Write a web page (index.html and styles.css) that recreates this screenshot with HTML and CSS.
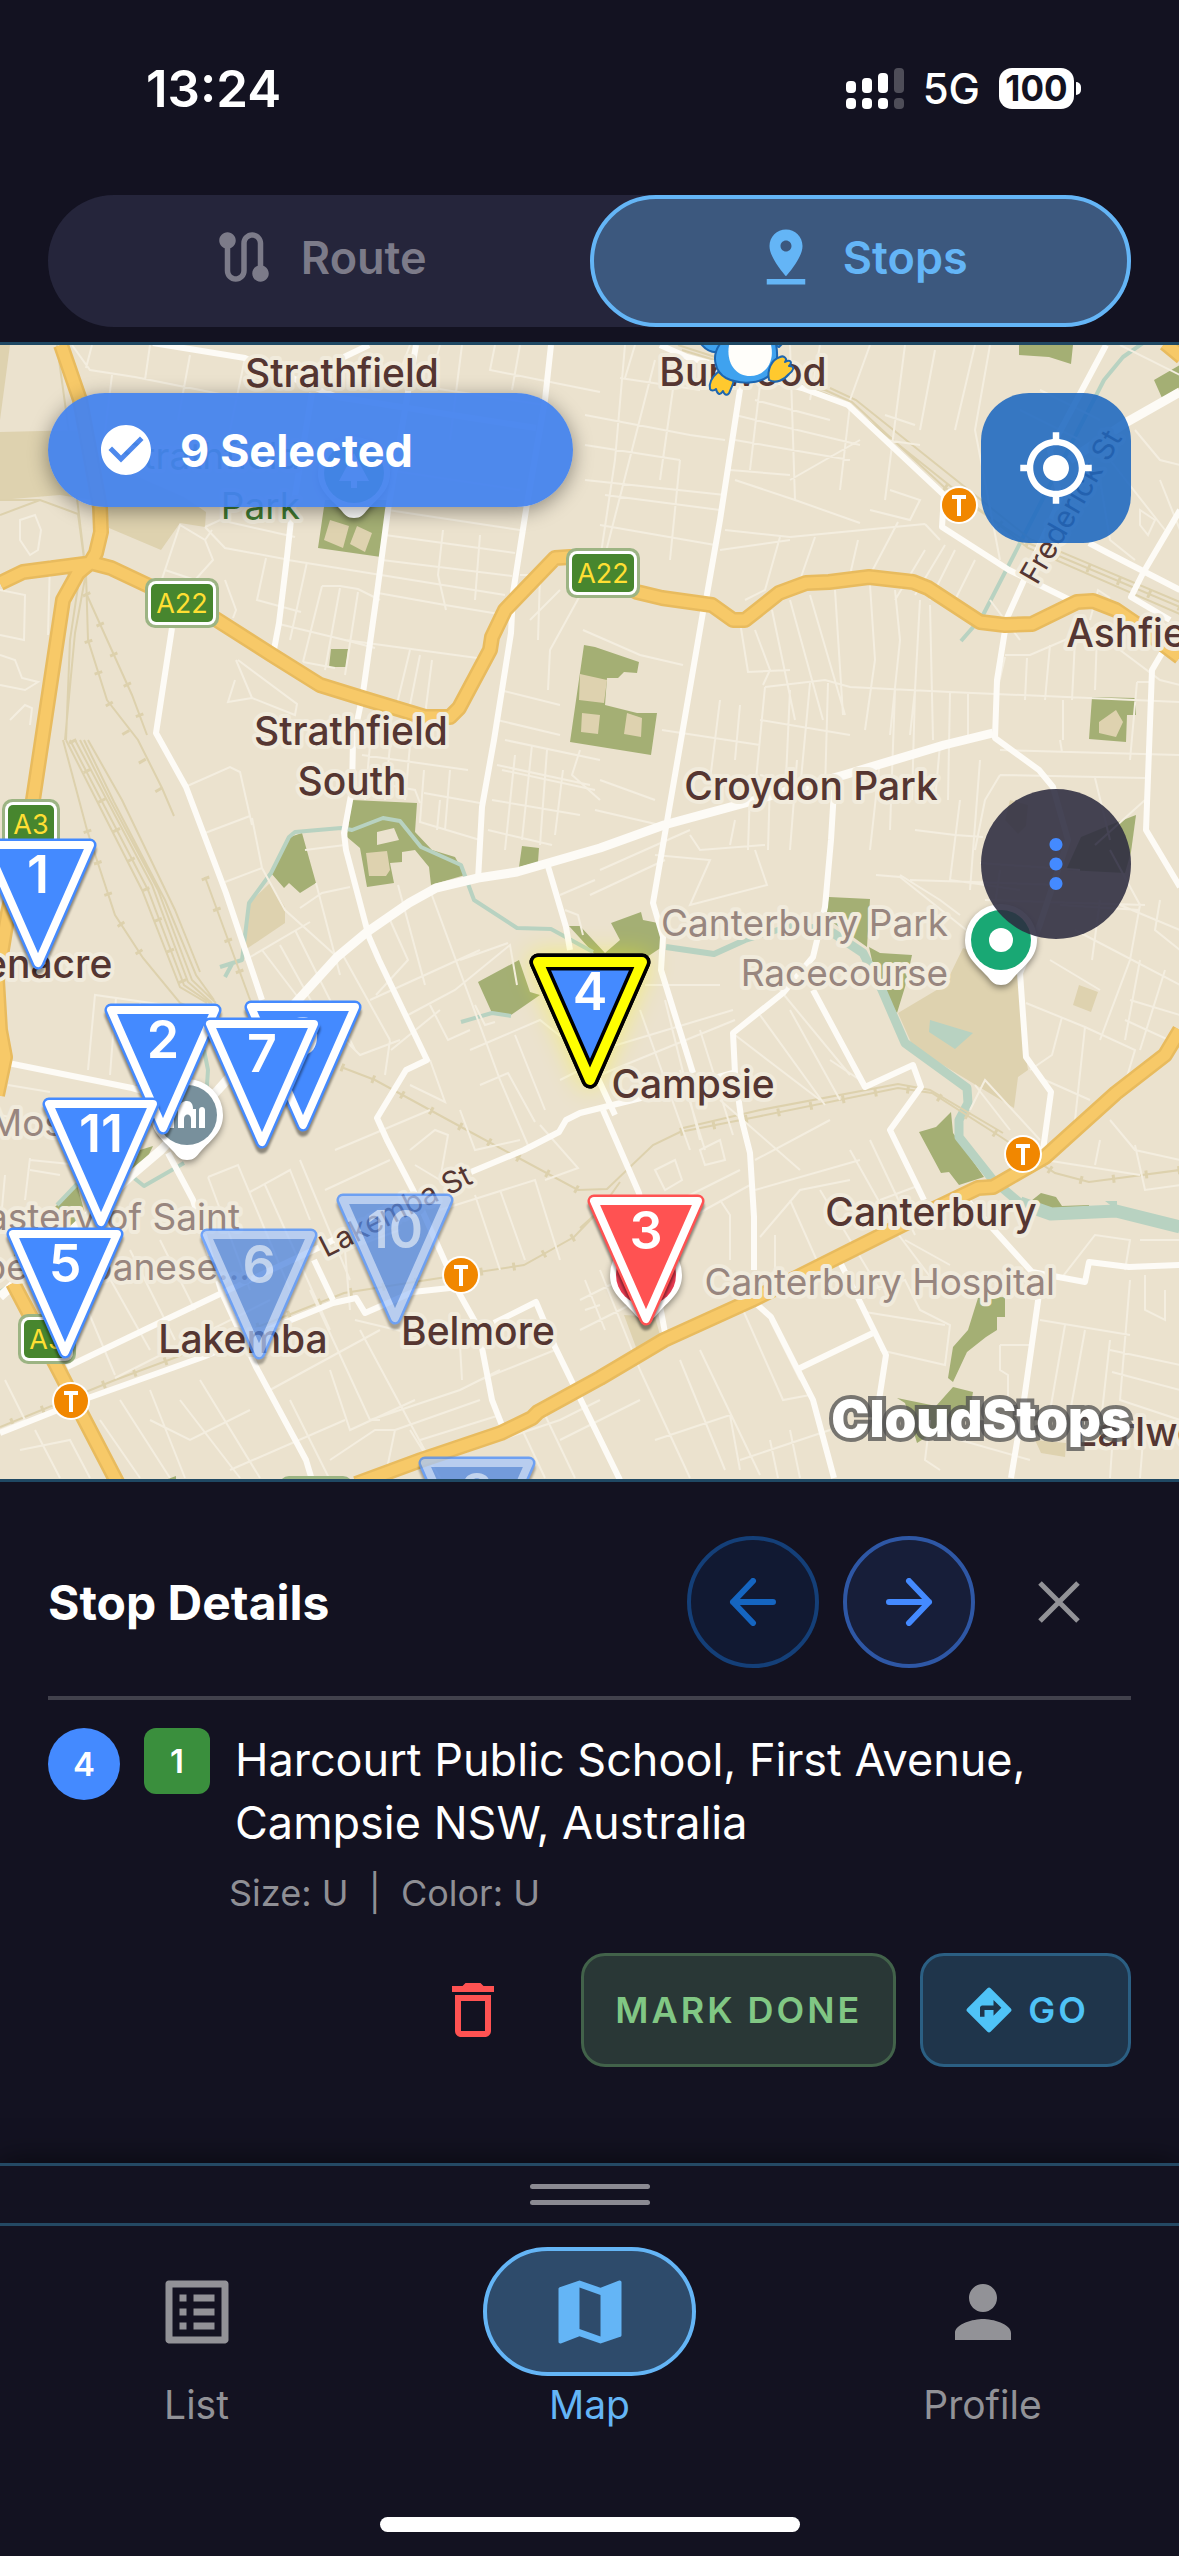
FILE: index.html
```html
<!DOCTYPE html>
<html lang="en">

<head>
    <meta charset="UTF-8">
    <meta name="viewport" content="width=device-width, initial-scale=1.0">
    <title>CloudStops</title>
    <link rel="stylesheet" href="styles.css">
</head>

<body>
    <div id="app">
        <header class="header">
            <div class="status">
                <span class="time">13:24</span>
                <div class="status-right">
                    <svg class="signal" viewBox="0 0 58 42" fill="#fff">
                        <rect x="0" y="13" width="10" height="12" rx="4" />
                        <rect x="16" y="10" width="10" height="15" rx="4" />
                        <rect x="32" y="5" width="10" height="20" rx="4" />
                        <rect x="48" y="0" width="10" height="25" rx="4" opacity=".25" />
                        <rect x="0" y="30" width="10" height="11" rx="4" />
                        <rect x="16" y="30" width="10" height="11" rx="4" />
                        <rect x="32" y="30" width="10" height="11" rx="4" />
                        <rect x="48" y="30" width="10" height="11" rx="4" opacity=".25" />
                    </svg>
                    <span class="network">5G</span>
                    <span class="battery">100</span>
                </div>
            </div>
            <div class="switch">
                <button type="button" class="switch-item">
                    <svg class="icon" viewBox="0 0 24 24"><path d="M19 15.18V7c0-2.21-1.79-4-4-4s-4 1.79-4 4v10c0 1.1-.9 2-2 2s-2-.9-2-2V8.82C8.16 8.4 9 7.3 9 6c0-1.66-1.34-3-3-3S3 4.34 3 6c0 1.3.84 2.4 2 2.82V17c0 2.21 1.79 4 4 4s4-1.79 4-4V7c0-1.1.9-2 2-2s2 .9 2 2v8.18c-1.16.41-2 1.51-2 2.82 0 1.66 1.34 3 3 3s3-1.34 3-3c0-1.3-.84-2.4-2-2.82z" /></svg>
                    Route
                </button>
                <button type="button" class="switch-item active">
                    <svg class="icon" viewBox="0 0 24 24"><path d="M18 8c0-3.31-2.69-6-6-6S6 4.69 6 8c0 4.5 6 11 6 11s6-6.5 6-11zm-8 0c0-1.1.9-2 2-2s2 .9 2 2-.89 2-2 2c-1.1 0-2-.9-2-2zM5 20v2h14v-2H5z" /></svg>
                    Stops
                </button>
            </div>
        </header>

        <main class="map">
            <svg class="map-canvas" viewBox="0 345 1179 1134" preserveAspectRatio="xMidYMid slice">
                <defs>
                    <path id="tri" d="M-52 0H52L0 118Z" />
                    <path id="drop" d="M0 45C-7 45-9 42-14 36-24 25-36 17-36 0A36 36 0 0 1 36 0C36 17 24 25 14 36 9 42 7 45 0 45Z" />
                    <g id="train">
                        <circle r="19" fill="#fff" />
                        <circle r="17" fill="#f18700" />
                        <path d="M-7-8H7M0-8V11" stroke="#fff" stroke-width="4" />
                    </g>
                    <g id="shield">
                        <rect x="-37" y="-25" width="74" height="50" rx="10" fill="#9cb483" />
                        <rect x="-34" y="-22" width="68" height="44" rx="8" fill="#fff" />
                        <rect x="-31" y="-19" width="62" height="38" rx="5" fill="#47862e" />
                    </g>
                    <g id="shield-s">
                        <rect x="-29" y="-25" width="58" height="50" rx="10" fill="#9cb483" />
                        <rect x="-26" y="-22" width="52" height="44" rx="8" fill="#fff" />
                        <rect x="-23" y="-19" width="46" height="38" rx="5" fill="#47862e" />
                    </g>
                </defs>

                <rect y="345" width="1179" height="1134" fill="#ebe2ce" />

                <!-- sand areas -->
                <g class="sand">
                    <path d="M0 345H10L0 420ZM0 432 84 430 92 500 60 495 0 500ZM100 460 184 497 206 512 205 527 180 523 161 550 109 528Z" />
                    <path d="M270 883 285 907V923L245 950 249 903Z" />
                    <path d="M963 948 1020 970 1026 1057 1028 1070 1018 1077 1014 1108 913 1047 898 1013 945 985Z" />
                    <path d="M1079 985 1098 992 1091 1012 1073 1005ZM624 1315 655 1317 660 1335 637 1350ZM1035 1440 1066 1443 1065 1457 1041 1453Z" />
                    <path d="M1010 800 1028 805 1026 826 1018 834 1005 820Z" />
                </g>

                <!-- parks -->
                <g class="park">
                    <path d="M325 500H388L381 557 318 548ZM331 649H348L346 667H329Z" />
                    <path d="M584 645 595 647 639 662 637 673 624 672 618 678H607L605 705 637 713H657L651 755 570 742Z" />
                    <path d="M1019 345H1073L1071 364 1049 357 1019 355ZM1154 380 1180 365V387L1162 398Z" />
                    <path d="M1092 697 1136 698V715H1127L1126 742 1089 739Z" />
                    <path d="M352 800 417 803 415 832 432 850 455 857 465 875 431 885 429 867 415 850 402 852V862L390 863 394 883 367 887 360 848 347 837Z" />
                    <path d="M302 833 316 883 300 893 289 883 284 888 271 873 287 838ZM522 846 539 848 538 862 519 867Z" />
                    <path d="M519 960 478 982 492 1013 511 1015 540 995 530 992Z" />
                    <path d="M569 926H580L605 953 620 940 611 923 641 912 643 920 658 923 662 947 620 975 600 960Z" />
                    <path d="M829 897 870 899 867 947 825 917ZM869 947 880 953 912 955 905 987 897 1013 878 987Z" />
                    <path d="M1136 815 1131 852 1125 873 1066 870 1081 837 1110 825Z" />
                    <path d="M951 1112 953 1133 984 1177 959 1185 949 1172 941 1173 919 1132 936 1127Z" />
                    <path d="M1041 1193 1056 1197 1062 1206 1089 1205V1210L1039 1212 1026 1205Z" />
                    <path d="M978 1298 1005 1297V1317H997V1330L986 1337 967 1352 953 1382 948 1378 953 1347 968 1330Z" />
                    <path d="M953 1387 973 1392 970 1410 917 1443 905 1403 897 1398 936 1406Z" />
                    <path d="M153 1146 140 1173 128 1178 140 1150ZM77 1185 55 1207 75 1240 84 1210ZM168 1479 176 1476V1479ZM14 1254 22 1270 14 1265Z" />
                </g>
                <g class="sand">
                    <path d="M330 520 349 526 343 548 324 540ZM357 526 372 533 365 552 350 544ZM580 674 607 680 604 703 579 700ZM582 713 600 715 598 734 581 732ZM627 713 642 718 641 737 624 734Z" />
                    <path d="M1099 722 1116 710 1123 722 1116 737 1099 733ZM366 853 387 851 390 870 386 876H369Z" />
                </g>
                <path d="M377 832 394 828 399 840 377 845Z" fill="#ebe2ce" />

                <!-- water -->
                <g class="water">
                    <path d="M220 967 242 960 249 903 271 873 289 837 295 832 341 828 352 830 383 818 400 821 421 847 461 865 474 900 517 928 551 929 593 952M225 977 232 964" />
                    <path d="M461 1022 492 1013 511 1016M1143 343 1123 357 1104 380 982 617 961 641M184 1163 144 1186 134 1178M57 1205 77 1184M204 1050 208 1070 206 1100M0 1292 12 1284" />
                    <path d="M666 947 714 954 745 940 794 925" stroke-width="6" />
                    <path d="M794 925 833 933 863 953 882 990 905 1043 967 1088 968 1103 959 1120V1137L993 1180 1020 1203" stroke-width="9" />
                    <path d="M1020 1203 1051 1214 1116 1211 1180 1227" stroke-width="13" />
                    <path d="M930 1020 973 1033 955 1049 929 1032ZM1105 1201H1117V1210Z" fill="#b8d2c1" stroke="none" />
                </g>

                <!-- railways -->
                <g class="rail">
                    <path d="M57 345 70 440 86 573 75 633 65 740M80 573 70 640 66 740M86 573 88 640 107 700 138 740 162 788 174 816M86 593 132 695 147 735M0 500 40 500 78 514 86 573M0 515 40 500" />
                    <path d="M63 740 87 830 115 915 143 958 180 1003 210 1015" />
                    <path d="M66 740 142 890 180 987 207 1003M70 740 148 890 184 985 210 1003M75 740 152 885 188 982 212 1003M80 740 110 800 158 890 192 980 216 1003M84 740 114 802 165 900 196 975 214 1000M88 740 122 800 175 910 200 972" />
                    <path d="M205 877 249 997 262 1030M341 1067 375 1080 463 1128 578 1190 607 1189 653 1145 680 1132 756 1117 898 1088 932 1093 1001 1137 1055 1173 1089 1182 1180 1170" />
                    <path d="M683 1128 760 1110 898 1084 930 1090 1003 1133M580 1228 600 1210 620 1182M600 1210 574 1237 524 1265 440 1278 344 1293 268 1323 115 1380 0 1427" />
                    <path d="M678 345 740 365 825 390 852 402 944 487 1028 543 1180 607M682 350 826 394 850 406 1028 548 1180 614M830 388 856 400 1030 539 1180 602" />
                </g>
                <path class="sleepers" d="M72 740 146 890 184 985M86 593 132 695 147 735M88 640 107 700 174 816M87 830 115 915 143 958M205 877 249 997M341 1067 375 1080 463 1128 578 1190M680 1132 756 1117 898 1088 932 1093 1001 1137 1055 1173 1089 1182 1180 1170M574 1237 524 1265 440 1278 344 1293 268 1323 115 1380 0 1427M944 487 1028 543 1180 607" />

                <!-- side streets -->
                <path class="street" d="M72 345 90 370 135 377 240 398M92 345 86 368M112 375 104 440M150 345 145 380M190 355 178 420M245 358 230 430M205 527 225 548 290 560M205 527 220 520 295 537M160 585 180 525 205 540 213 560 195 580 165 570M205 540 212 530M20 520 35 515 41 530 38 550 30 555 20 540ZM0 590 25 595 24 640 0 635M0 655 15 660 22 678 38 682 25 690 0 685M10 720 25 705 32 708 30 725M50 560 48 635M225 580 236 610 233 618M288 560 505 595M307 562 290 640M266 558 257 600 301 612M322 586H340L358 589 380 600M322 586 303 662M340 588 325 670M358 592 345 675M303 662 335 668M279 624 345 640 492 660M345 640 375 648M238 660 297 704 295 715 252 698 236 660M252 698 228 702 235 680M410 345 395 385M462 345 450 440M495 345 490 370 600 392M392 382 545 405M440 345 432 375M520 345 512 390M388 470 520 490M388 510 520 530M385 535 515 553M382 560 512 576M378 593 445 605 505 615M443 530 438 575 446 610M480 535 475 600M410 650 395 712M420 655 408 715M432 660 425 715M505 740 600 760M502 770 595 790M500 690 560 705M497 720 560 735M520 575 540 575 538 640M530 620 560 590M548 690 550 650 583 590M583 630 640 655 683 665" />
                <path class="street" d="M370 745 365 800M390 745 385 800M410 745 405 800M362 755 468 770M360 780 415 790 420 803M424 770 420 822 480 840M424 793 480 803M440 800 437 830M450 770 445 830M515 755 505 850M532 745 522 840M547 750 540 845M563 770 555 835M580 750 572 775 600 800M497 765 590 785M492 800 580 815M488 830 552 845M185 787 230 767 240 772 252 825M205 833 250 816M225 882 262 868 285 910 335 955M252 818 262 868M305 850 345 845M316 883 340 975M300 908 322 893 350 887M245 960 310 922M262 950 300 1000M280 945 330 1035M295 930 355 1050M340 950 390 1040M376 995 408 960 390 920M425 985 398 885M370 1000 480 950M408 1015 455 990 510 945 517 985M430 890 500 1080 530 1150M391 1050 440 1010M340 1035 360 1055 400 1040M430 1005 448 1040 470 1030M475 1005 485 1025 495 1022M390 1040 385 1075M410 1085 445 1102 430 1060M480 1085 508 1073 535 1122M470 1050 540 1020 590 1060M515 1035 545 1110M560 1080 600 1060M460 960 508 943M560 895 595 880M565 910 578 915 583 935M88 1070 95 995 200 1010M116 998 110 1075M140 1003 135 1085M8 1085 50 1092M0 1115 45 1125M30 1160 80 1165M5 1175 0 1230M30 1158 25 1200M30 1170 60 1175" />
                <path class="street" d="M625 345 615 460 600 560M655 360 600 575M620 378 700 390M635 345 625 378M585 415 690 435M585 445 680 460M585 480 725 495M605 495 720 510M600 525 715 545M675 375 660 480M690 435 725 440M680 460 670 560M755 400 830 420M760 385 750 470M735 415 860 445M735 440 850 460M730 470 790 475M790 345 795 500 860 523M850 405 840 490M820 345 810 400M870 345 850 400M905 345 885 500M935 350 920 430M975 345 955 430M735 480 795 500M860 440 790 480M890 490 920 500 910 520 870 510M885 415 915 425M885 440 920 445M725 530 790 537M720 550 790 540M780 537 765 590 745 600M815 537 800 580M858 540 850 575M898 522 870 575M790 537 925 524M925 524 940 540M925 550 895 600M945 545 915 595M955 550 930 600M975 560 950 610M740 622 748 672 790 670M755 630 770 670 763 685M772 610 795 720M790 600 823 720M810 595 845 715M835 590 843 715M870 585 875 660 865 730M895 590 900 640 890 735M920 600 915 690 910 735M930 605 933 740M765 687 825 680 850 687 950 692 1180 702M765 687 755 790M790 690 785 800M810 683 800 790M828 683 825 790M895 690 890 830M915 690 912 800M950 692 948 800M968 692 968 735M1005 655H1030L1100 625M1005 657 995 700M1050 645 1045 700M1075 640 1072 700M1097 635 1095 690M1027 658 1025 700M1063 700V740M1120 650 1160 680 1180 685M1137 682H1152M1137 682 1130 760M760 775 830 790M760 720 850 735M662 730 760 745M720 700 710 780M740 705 735 760" />
                <path class="street" d="M990 345 975 430 1000 560M1040 390 1100 420M1020 410 1080 440M1110 460 1165 530M1120 345 1180 375M1135 430 1160 460 1180 465M1140 510 1155 520 1148 535 1140 525ZM1160 480 1180 530M1100 480 1110 540 1135 560M990 600 1020 640M1090 620 1098 590 1110 598M1160 620 1180 640M1000 750 1180 755M1000 775 1145 778M1060 740 1062 752M1095 778 1110 840M1145 800 1095 845M1110 850 1140 905 1130 960 1100 1040M940 745 935 800M980 760 970 890M1000 775 985 800 975 850M960 800 950 880 1020 890M915 830 955 835M955 835 983 837M900 875 940 900 960 915M876 875 900 877 985 945M910 880 1060 885M980 863 1080 870M985 900 1145 905M1000 870 990 940M1060 905 1140 910M1075 930 1180 985M1100 900 1092 960M1120 905 1180 930M1050 960 1100 990M1160 900 1155 930 1180 950M1026 1003 1085 1027 1135 1050 1120 1100M1062 1017 1052 1055 1030 1070M1085 1027 1075 1120M1125 1020 1180 1045M1130 1000 1180 1015M1140 960 1125 1040M1165 970 1140 1050M1045 1080 1090 1100M1110 1120 1135 1150 1180 1160M1045 1160 1140 1175M1135 1145 1145 1190 1180 1185M1100 1140 1095 1165M970 1110 985 1080 1040 1140M975 1085 1010 1130" />
                <path class="street" d="M600 780 655 800M595 810 660 825M600 870 690 830M590 895 665 860M655 855 710 860 690 905 767 885 755 850M690 835 700 850 765 845M735 820 730 845M750 790 748 850M880 760 870 850M797 760 790 850M770 780 768 850M645 985 720 985M600 1050 733 1010M600 1075 735 1020M640 1010 690 1150M665 1000 700 1140M700 1030 733 1135M735 1035 820 1100M760 1015 825 1105M780 990 850 1075M830 1060 860 1080M790 1010 840 1100M720 1100 800 1170M680 1070 705 1150M655 1170 675 1160 682 1180 665 1190ZM700 1150 720 1140 725 1160 705 1165ZM640 1220 740 1170M650 1240 750 1185M755 1160 830 1120M755 1190 860 1160M760 1237 800 1190 850 1180M730 1260V1215L720 1200M775 1235V1270M790 1200 830 1290M820 1190 880 1290M850 1150 895 1230 940 1290M870 1140 915 1235M880 1200 920 1185M905 1240 950 1265M870 1290 905 1280 920 1310 950 1325 945 1365 880 1350M865 1312 945 1325M770 1320 800 1380M743 1310 783 1400 810 1395M700 1350 760 1475M680 1360 725 1470M640 1370 690 1478M655 1440 730 1415 740 1470M640 1400 560 1440M740 1460 830 1430M770 1440 778 1478M790 1430 800 1478M930 1420 925 1460 940 1470M960 1440 1030 1460M1040 1320 1130 1335M1130 1280 1120 1400 1180 1420M1065 1325 1045 1440M1085 1330 1065 1440M1110 1340 1100 1430M1112 1372 1180 1390M1110 1350 1180 1365M1060 1280 1095 1235 1130 1240 1125 1270M1145 1275V1310L1165 1320V1290M1000 1345H1030M1000 1345V1370L1008 1375V1400L990 1407 975 1400M1140 1240H1180M1115 1405 1110 1478M1145 1415 1140 1478M585 1280 605 1330M600 1270 640 1370M580 1300 620 1280M580 1330 640 1300" />
                <path class="street" d="M208 1177 238 1165 290 1290M208 1177 250 1290M250 1192 290 1170 310 1220M265 1185 330 1330M300 1160 350 1280M335 1150 430 1110M325 1190 390 1160M410 1150 435 1130 448 1135 440 1180 415 1165M460 1110 475 1150 520 1140M440 1210 535 1180 560 1260M475 1195 500 1270M500 1190 525 1260M540 1125 578 1168 545 1180M350 1310 345 1250 400 1230M310 1290 370 1420 380 1420M360 1330 430 1460M355 1320 460 1345 462 1380M370 1420 460 1390 500 1370M270 1390 380 1330M290 1400 330 1480M330 1370 350 1430 415 1400M250 1410 190 1440 150 1420M180 1400 240 1478M150 1390 185 1478M120 1400 170 1478M100 1420 140 1478M200 1380 260 1478M230 1470 345 1420M330 1460 375 1430 395 1430 385 1478M395 1430 480 1400M420 1440 500 1415M410 1430 440 1478M20 1450 70 1440 90 1478M35 1430 60 1478M5 1380 25 1420 0 1430M75 1280 115 1375M105 1270 150 1350M130 1250 175 1340M160 1240 195 1310M115 1378 270 1300M480 1380 555 1350M500 1440 560 1420 600 1400M520 1425 545 1478M545 1415 575 1478M585 1310 600 1305" />

                <!-- main roads -->
                <g class="road">
                    <path d="M153 343 245 358 337 397 536 428M344 357 369 345M551 345 545 400 526 510 513 593 511 633 494 740 482 807 478 880M312 393 291 520 287 557 279 623 273 655" />
                    <path d="M416 345 388 510 377 593 363 693 358 717 353 740 352 790 344 833 346 850 369 937 379 960 427 1060 406 1070 377 1118 387 1140 413 1190 459 1293 478 1327 492 1400 503 1428" />
                    <path d="M172 628 156 733 186 787 226 893 262 1000M168 1153 193 1200 222 1293 256 1367 306 1460 312 1480M8 1063 132 1088 175 1100M547 863 566 927 570 950" />
                    <path d="M645 1097 580 1113 566 1120 559 1132 524 1150 471 1172M380 1215 320 1247 222 1293 165 1320 67 1367M645 1097 733 1073M0 1433 88 1398 161 1372 203 1357 291 1320 333 1303 356 1298 365 1313 413 1292 459 1287M314 1260 333 1300" />
                    <path d="M494 1323 536 1302 555 1347 620 1480M603 1110 639 1193 666 1338M741 383 720 520 706 600 703 612 681 740 653 903 663 937 661 970 693 1073M580 1040 615 1115M660 345 687 357 802 388 848 405 944 495 942 527 1009 570 1074 602" />
                    <path d="M1106 345 1050 450 1060 500 1007 618 997 680 995 738 1039 770 1053 787 1068 840 1039 927 1020 973 1026 1057 1051 1092 1043 1150M1089 543 1108 553 1180 590M1180 510 1143 573 1131 597 1170 620M1162 653 1152 670 1146 830 1180 887" />
                    <path d="M834 790 831 840 825 907 813 957 783 993 733 1033 735 1073 741 1117 750 1153 754 1217V1270M813 990 865 1087 913 1065 921 1087 890 1130 924 1200M840 1262 859 1300 886 1355 879 1400M752 1300 771 1317 813 1400 834 1478M800 1368 873 1333" />
                    <path d="M967 1200 1032 1272 1085 1282 1089 1262 1129 1267 1180 1265M1041 1280 1024 1400 1011 1478" />
                </g>
                <path class="road wide" d="M993 733 944 745 844 775 745 803 664 825 600 848 517 872 478 878 436 888 409 903 367 932 337 957 298 1000 218 1090 161 1150 134 1173 0 1297M1127 422 1180 392M1070 460 1127 422" />

                <!-- motorways -->
                <g id="motorways">
                    <path class="casing" d="M61 345 80 400 100 507 101 532 96 553 90 563 78 573 63 600 57 640 42 740 33 800 8 913-3 980 0 1030 5 1057-3 1095M0 583 23 572 92 563 111 568 147 585 214 618 272 655 320 685 362 698 425 717H450L459 708 490 650 492 637 505 610 555 558 570 557 603 573 637 592 662 598 712 605 733 620H745L779 593 806 583 829 582 869 577 913 582 928 588 980 622 1005 625 1032 624 1077 602 1093 601 1116 610 1135 623 1180 657M1165 343 1182 357M1180 1030 1165 1055 1116 1093 1045 1157 993 1187 978 1188 932 1210 848 1252 752 1300 664 1340 600 1378 538 1412 532 1418 501 1433 421 1460 356 1484M13 1283 55 1363 118 1484" />
                    <path class="surface" d="M61 345 80 400 100 507 101 532 96 553 90 563 78 573 63 600 57 640 42 740 33 800 8 913-3 980 0 1030 5 1057-3 1095M0 583 23 572 92 563 111 568 147 585 214 618 272 655 320 685 362 698 425 717H450L459 708 490 650 492 637 505 610 555 558 570 557 603 573 637 592 662 598 712 605 733 620H745L779 593 806 583 829 582 869 577 913 582 928 588 980 622 1005 625 1032 624 1077 602 1093 601 1116 610 1135 623 1180 657M1165 343 1182 357M1180 1030 1165 1055 1116 1093 1045 1157 993 1187 978 1188 932 1210 848 1252 752 1300 664 1340 600 1378 538 1412 532 1418 501 1433 421 1460 356 1484M13 1283 55 1363 118 1484" />
                </g>

                <!-- road shields -->
                <use href="#shield" x="182" y="603" />
                <use href="#shield" x="603" y="573" />
                <use href="#shield-s" x="31" y="824" />
                <use href="#shield-s" x="47" y="1339" />
                <use href="#shield" x="316" y="1501" />
                <g class="shield-text">
                    <text x="182" y="613">A22</text>
                    <text x="603" y="583">A22</text>
                    <text x="31" y="834">A3</text>
                    <text x="47" y="1349">A3</text>
                </g>

                <!-- stations -->
                <use href="#train" x="959" y="505" />
                <use href="#train" x="1023" y="1154" />
                <use href="#train" x="461" y="1275" />
                <use href="#train" x="71" y="1401" />

                <!-- suburbs -->
                <g class="suburb">
                    <text x="342" y="387">Strathfield</text>
                    <text x="743" y="386">Burwood</text>
                    <text x="351" y="745">Strathfield</text>
                    <text x="352" y="795">South</text>
                    <text x="811" y="800">Croydon Park</text>
                    <text x="693" y="1098">Campsie</text>
                    <text x="15" y="978">Greenacre</text>
                    <text x="243" y="1353">Lakemba</text>
                    <text x="478" y="1345">Belmore</text>
                    <text x="931" y="1226">Canterbury</text>
                    <text x="1143" y="647">Ashfield</text>
                    <text x="1161" y="1446">Earlwood</text>
                </g>
                <g class="place">
                    <text x="948" y="936">Canterbury Park</text>
                    <text x="948" y="986">Racecourse</text>
                    <text x="1055" y="1295">Canterbury Hospital</text>
                    <text x="130" y="1136">Mosque</text>
                    <text x="240" y="1230">Monastery of Saint</text>
                    <text x="250" y="1280">Charbel Lebanese...</text>
                    <text class="green" x="300" y="469">Strathfield</text>
                    <text class="green" x="300" y="519">Park</text>
                </g>
                <g class="street-name">
                    <text transform="translate(1037 586) rotate(-60)">Frederick St</text>
                    <text transform="translate(326 1258) rotate(-27)">Lakemba St</text>
                </g>

                <!-- places of interest -->
                <g class="poi">
                    <g transform="translate(354 473)">
                        <use href="#drop" fill="#fff" />
                        <circle r="30" fill="#26934f" />
                        <path d="M0-20 15 8H3V15H-3V8H-15Z" fill="#fff" />
                    </g>
                    <g transform="translate(1001 940)">
                        <use href="#drop" fill="#fff" />
                        <circle r="30" fill="#19a874" />
                        <circle r="12" fill="#fff" />
                    </g>
                    <g transform="translate(187 1115)">
                        <use href="#drop" fill="#fff" />
                        <circle r="30" fill="#78909c" />
                        <path d="M-19 13V-1C-19-6-13-6-13-1V13ZM-9 13V-6C-7-12-4-14 0-14S6-11 6-6H9V13H4V4C4-2-3-2-3 4V13ZM12 13V-5C12-9 18-9 18-5V13Z" fill="#fff" />
                    </g>
                    <g transform="translate(646 1275)">
                        <use href="#drop" fill="#fff" />
                        <circle r="30" fill="#e53950" />
                    </g>
                </g>

                <!-- penguin -->
                <g stroke="#1d66b0" stroke-width="2" stroke-linejoin="round">
                    <path d="M718 372C711 378 709 384 710 389 711 391 714 391 716 389 717 394 720 396 723 391 725 397 729 395 730 391 733 384 736 379 730 376Z" fill="#ffc92e" />
                    <path d="M701 344C706 350 713 353 719 352L724 344ZM772 344 779 347 782 344Z" fill="#3fa2ef" />
                    <path d="M720 344C711 356 715 372 726 378 738 384 754 384 764 379 776 373 779 360 776 344Z" fill="#3fa2ef" />
                    <path d="M729 345C726 362 735 376 750 376S775 362 771 345Z" fill="#fffefa" stroke="none" />
                    <path d="M769 380C767 370 771 360 780 357 784 355 788 359 785 362 790 359 793 362 789 366 796 366 793 371 789 374 784 380 776 384 769 380Z" fill="#ffc92e" />
                </g>

                <!-- stop pins -->
                <g class="pins">
                    <g class="pin" transform="translate(38 845)">
                        <use class="edge" href="#tri" /><use class="face" href="#tri" />
                        <text y="48">1</text>
                    </g>
                    <g class="pin" transform="translate(163 1010)">
                        <use class="edge" href="#tri" /><use class="face" href="#tri" />
                        <text y="48">2</text>
                    </g>
                    <g class="pin" transform="translate(303 1007)">
                        <use class="edge" href="#tri" /><use class="face" href="#tri" />
                        <text y="48">9</text>
                    </g>
                    <g class="pin" transform="translate(262 1024)">
                        <use class="edge" href="#tri" /><use class="face" href="#tri" />
                        <text y="48">7</text>
                    </g>
                    <g class="pin" transform="translate(101 1104)">
                        <use class="edge" href="#tri" /><use class="face" href="#tri" />
                        <text y="48">11</text>
                    </g>
                    <g class="pin" transform="translate(65 1234)">
                        <use class="edge" href="#tri" /><use class="face" href="#tri" />
                        <text y="48">5</text>
                    </g>
                    <g class="pin faded" transform="translate(259 1235)">
                        <use class="edge" href="#tri" /><use class="face" href="#tri" />
                        <text y="48">6</text>
                    </g>
                    <g class="pin faded" transform="translate(395 1200)">
                        <use class="edge" href="#tri" /><use class="face" href="#tri" />
                        <text y="48">10</text>
                    </g>
                    <g class="pin faded" transform="translate(477 1463)">
                        <use class="edge" href="#tri" /><use class="face" href="#tri" />
                        <text y="48">8</text>
                    </g>
                    <g class="pin red" transform="translate(646 1201)">
                        <use class="edge" href="#tri" /><use class="face" href="#tri" />
                        <text y="48">3</text>
                    </g>
                    <g class="pin current" transform="translate(590 962)">
                        <use class="edge" href="#tri" /><use class="face" href="#tri" /><use class="ring" href="#tri" />
                        <text y="48">4</text>
                    </g>
                </g>
            </svg>

            <button type="button" class="selected">
                <svg class="icon" viewBox="0 0 24 24"><path d="M12 2C6.48 2 2 6.48 2 12s4.48 10 10 10 10-4.48 10-10S17.52 2 12 2zm-2 15l-5-5 1.41-1.41L10 14.17l7.59-7.59L19 8l-9 9z" /></svg>
                9 Selected
            </button>
            <button type="button" class="locate" aria-label="My location">
                <svg class="icon" viewBox="0 0 24 24"><path d="M12 8c-2.21 0-4 1.79-4 4s1.79 4 4 4 4-1.79 4-4-1.79-4-4-4zm8.94 3c-.46-4.17-3.77-7.48-7.94-7.94V1h-2v2.06C6.83 3.52 3.52 6.83 3.06 11H1v2h2.06c.46 4.17 3.77 7.48 7.94 7.94V23h2v-2.06c4.17-.46 7.48-3.77 7.94-7.94H23v-2h-2.06zM12 19c-3.87 0-7-3.13-7-7s3.13-7 7-7 7 3.13 7 7-3.13 7-7 7z" /></svg>
            </button>
            <button type="button" class="more" aria-label="More">
                <svg class="icon" viewBox="0 0 24 24"><path d="M12 8c1.1 0 2-.9 2-2s-.9-2-2-2-2 .9-2 2 .9 2 2 2zm0 2c-1.1 0-2 .9-2 2s.9 2 2 2 2-.9 2-2-.9-2-2-2zm0 6c-1.1 0-2 .9-2 2s.9 2 2 2 2-.9 2-2-.9-2-2-2z" /></svg>
            </button>
            <span class="brand">CloudStops</span>
        </main>

        <section class="details">
            <div class="details-head">
                <h2>Stop Details</h2>
                <button type="button" class="arrow prev" aria-label="Previous stop">
                    <svg viewBox="0 0 48 48"><path d="M44 24H4M24 3 4 24 24 45" /></svg>
                </button>
                <button type="button" class="arrow next" aria-label="Next stop">
                    <svg viewBox="0 0 48 48"><path d="M4 24H44M24 3 44 24 24 45" /></svg>
                </button>
                <button type="button" class="close" aria-label="Close">
                    <svg viewBox="0 0 42 42"><path d="M2 2 40 40M40 2 2 40" /></svg>
                </button>
            </div>
            <div class="stop">
                <span class="num">4</span>
                <span class="count">1</span>
                <div class="stop-info">
                    <p class="address">Harcourt Public School, First Avenue, Campsie NSW, Australia</p>
                    <p class="meta">Size: U&nbsp; |&nbsp; Color: U</p>
                </div>
            </div>
            <div class="actions">
                <button type="button" class="delete" aria-label="Delete">
                    <svg class="icon" viewBox="0 0 24 24"><path d="M6 19c0 1.1.9 2 2 2h8c1.1 0 2-.9 2-2V7H6v12zM8 9h8v10H8V9zm7.5-5l-1-1h-5l-1 1H5v2h14V4z" /></svg>
                </button>
                <button type="button" class="done">MARK DONE</button>
                <button type="button" class="go">
                    <svg class="icon" viewBox="0 0 24 24"><path d="M21.71 11.29l-9-9c-.39-.39-1.02-.39-1.41 0l-9 9c-.39.39-.39 1.02 0 1.41l9 9c.39.39 1.02.39 1.41 0l9-9c.39-.38.39-1.01 0-1.41zM14 14.5V12h-4v3H8v-4c0-.55.45-1 1-1h5V7.5l3.5 3.5-3.5 3.5z" /></svg>
                    GO
                </button>
            </div>
        </section>

        <footer class="footer">
            <div class="handle">
                <span></span>
                <span></span>
            </div>
            <nav class="tabs">
                <a href="#list">
                    <span class="tab-icon"><svg class="icon" viewBox="0 0 24 24"><path d="M19 5v14H5V5h14m1.1-2H3.9c-.5 0-.9.4-.9.9v16.2c0 .4.4.9.9.9h16.2c.4 0 .9-.5.9-.9V3.9c0-.5-.5-.9-.9-.9zM11 7h6v2h-6V7zm0 4h6v2h-6v-2zm0 4h6v2h-6zM7 7h2v2H7zm0 4h2v2H7zm0 4h2v2H7z" /></svg></span>
                    List
                </a>
                <a href="#map" class="active">
                    <span class="tab-icon"><svg class="icon" viewBox="0 0 24 24"><path d="M20.5 3l-.16.03L15 5.1 9 3 3.36 4.9c-.21.07-.36.25-.36.48V20.5c0 .28.22.5.5.5l.16-.03L9 18.9l6 2.1 5.64-1.9c.21-.07.36-.25.36-.48V3.5c0-.28-.22-.5-.5-.5zM15 19l-6-2.11V5l6 2.11V19z" /></svg></span>
                    Map
                </a>
                <a href="#profile">
                    <span class="tab-icon"><svg class="icon" viewBox="0 0 24 24"><path d="M12 12c2.21 0 4-1.79 4-4s-1.79-4-4-4-4 1.79-4 4 1.79 4 4 4zm0 2c-2.67 0-8 1.34-8 4v2h16v-2c0-2.66-5.33-4-8-4z" /></svg></span>
                    Profile
                </a>
            </nav>
            <div class="home-bar"></div>
        </footer>
    </div>
</body>

</html>
```
FILE: styles.css
```css
* {
    margin: 0;
    padding: 0;
    box-sizing: border-box;
}

body {
    background-color: #131221;
    color: #fff;
    font-family: Inter, "Liberation Sans", sans-serif;
}

button {
    display: flex;
    align-items: center;
    justify-content: center;
    border: none;
    background: none;
    color: inherit;
    font: inherit;
}

svg {
    display: block;
}

.icon {
    fill: currentColor;
}

#app {
    display: flex;
    flex-direction: column;
    min-height: 100vh;
}

/* header */
.header {
    padding: 0 48px 15px;
    border-bottom: 3px solid #1f4863;
}

.status {
    display: flex;
    align-items: center;
    justify-content: space-between;
    height: 177px;
    margin-bottom: 18px;
    padding: 0 50px 0 98px;
}

.time {
    font-size: 51px;
    font-weight: 600;
}

.status-right {
    display: flex;
    align-items: center;
    gap: 19px;
}

.signal {
    width: 58px;
    height: 42px;
}

.network {
    font-size: 42px;
    font-weight: 500;
}

.battery {
    position: relative;
    width: 75px;
    margin-right: 7px;
    border-radius: 13px;
    background-color: #fff;
    color: #131221;
    font-size: 35px;
    font-weight: 700;
    line-height: 41px;
    text-align: center;
}

.battery::after {
    content: "";
    position: absolute;
    right: -7px;
    top: 14px;
    width: 5px;
    height: 13px;
    border-radius: 0 5px 5px 0;
    background-color: #fff;
}

.switch {
    display: grid;
    grid-template-columns: 1fr 1fr;
    height: 132px;
    border-radius: 66px;
    background-color: #25253b;
}

.switch-item {
    gap: 24px;
    padding-bottom: 8px;
    border-radius: 66px;
    color: #7c7b89;
    font-size: 45px;
    font-weight: 600;
}

.switch-item .icon {
    width: 66px;
    height: 66px;
}

.switch-item.active {
    border: 4px solid #64b5f6;
    background-color: #3c587e;
    color: #64b5f6;
}

/* map */
.map {
    position: relative;
    flex: 1;
    min-height: 600px;
    overflow: hidden;
    background-color: #ebe2ce;
}

.map-canvas {
    position: absolute;
    width: 100%;
    height: 100%;
}

.sand {
    fill: #ded2af;
}

.park {
    fill: #a4af74;
}

.water {
    fill: none;
    stroke: #b8d2c1;
    stroke-width: 4;
    stroke-linejoin: round;
}

.rail {
    fill: none;
    stroke: #ddd1ad;
    stroke-width: 2;
}

.sleepers {
    fill: none;
    stroke: #ddd1ad;
    stroke-width: 8;
    stroke-dasharray: 3 30;
}

.street {
    fill: none;
    stroke: #f4eee0;
    stroke-width: 2;
}

.road {
    fill: none;
    stroke: #fdfbf6;
    stroke-width: 6;
    stroke-linejoin: round;
}

.road.wide {
    stroke-width: 9;
}

.casing {
    fill: none;
    stroke: #e8bb5e;
    stroke-width: 16;
    stroke-linejoin: round;
}

.surface {
    fill: none;
    stroke: #f7c968;
    stroke-width: 11;
    stroke-linejoin: round;
}

.shield-text {
    fill: #ffdf33;
    font-size: 27px;
    text-anchor: middle;
}

.suburb,
.place,
.street-name {
    stroke: #f1ebdc;
    stroke-width: 8;
    stroke-linejoin: round;
    paint-order: stroke;
}

.suburb {
    fill: #553632;
    font-size: 39px;
    font-weight: 500;
    text-anchor: middle;
}

.place {
    fill: #98867f;
    font-size: 37px;
    text-anchor: end;
}

.place .green {
    fill: #3f7a32;
}

.street-name {
    fill: #553632;
    font-size: 30px;
}

.poi use {
    filter: drop-shadow(0 3px 3px rgba(0, 0, 0, .4));
}

.pin {
    fill: #448aff;
    stroke-linejoin: round;
    filter: drop-shadow(0 5px 1px rgba(0, 0, 0, .4));
}

.pin .edge {
    stroke: #448aff;
    stroke-width: 13;
}

.pin .face {
    stroke: #fff;
    stroke-width: 8;
}

.pin text {
    fill: #fff;
    font-size: 52px;
    font-weight: 600;
    text-anchor: middle;
}

.pin.faded {
    opacity: .75;
}

.pin.faded .face {
    fill: #4c84e0;
    stroke: #a8c7fa;
}

.pin.faded text {
    fill: #b4cef8;
}

.pin.red {
    fill: #ff5252;
}

.pin.red .edge {
    stroke: #ff5252;
}

.pin.current {
    filter: drop-shadow(0 0 12px rgba(255, 255, 0, .4));
}

.pin.current .edge,
.pin.current .face {
    stroke: #000;
    stroke-width: 17;
}

.pin.current .ring {
    fill: none;
    stroke: #ff0;
    stroke-width: 10;
}

.selected {
    position: absolute;
    left: 48px;
    top: 48px;
    justify-content: flex-start;
    gap: 24px;
    width: 525px;
    height: 114px;
    padding: 0 48px;
    border-radius: 57px;
    background-color: rgba(68, 131, 238, .94);
    box-shadow: 0 4px 20px rgba(0, 0, 0, .4);
    font-size: 45px;
    font-weight: 700;
}

.selected .icon {
    width: 60px;
    height: 60px;
}

.locate,
.more {
    position: absolute;
    right: 48px;
    width: 150px;
    height: 150px;
}

.locate {
    top: 48px;
    border-radius: 48px;
    background-color: rgba(28, 104, 192, .88);
}

.more {
    top: 444px;
    border-radius: 50%;
    background-color: rgba(44, 43, 64, .88);
    color: #448aff;
}

.locate .icon,
.more .icon {
    width: 78px;
    height: 78px;
}

.brand {
    position: absolute;
    right: 48px;
    bottom: 30px;
    font-size: 51px;
    font-weight: 900;
    line-height: 60px;
    -webkit-text-stroke: 8px rgba(80, 80, 80, .75);
    paint-order: stroke fill;
}

/* stop details */
.details {
    padding: 54px 48px 96px;
    border-top: 3px solid #1f4863;
}

.details-head {
    display: flex;
    align-items: center;
    padding-bottom: 28px;
    border-bottom: 4px solid #41414c;
}

.details-head h2 {
    flex: 1;
    font-size: 48px;
    font-weight: 700;
}

.arrow,
.close {
    stroke-linecap: round;
    stroke-linejoin: round;
    fill: none;
}

.arrow {
    width: 132px;
    height: 132px;
    margin-left: 24px;
    border: 4px solid #143f78;
    border-radius: 50%;
    background-color: #111932;
    stroke: #1565c0;
    stroke-width: 6;
}

.arrow.next {
    border-color: #2e57a5;
    background-color: #171e39;
    stroke: #448aff;
}

.arrow svg {
    width: 48px;
    height: 48px;
}

.close {
    width: 144px;
    height: 132px;
    margin-left: 12px;
    stroke: #929297;
    stroke-width: 5;
    stroke-linecap: butt;
}

.close svg {
    width: 42px;
    height: 42px;
}

.stop {
    display: flex;
    align-items: flex-start;
    margin-top: 28px;
}

.num,
.count {
    flex: none;
    font-weight: 600;
    font-size: 33px;
    text-align: center;
}

.num {
    width: 72px;
    line-height: 72px;
    border-radius: 50%;
    background-color: #448aff;
}

.count {
    width: 66px;
    margin-left: 24px;
    line-height: 66px;
    border-radius: 12px;
    background-color: #3a8f3d;
}

.stop-info {
    margin-left: 19px;
}

.address {
    padding-left: 6px;
    font-size: 45px;
    line-height: 63px;
}

.meta {
    margin-top: 12px;
    color: #8f8f95;
    font-size: 36px;
    line-height: 54px;
}

.actions {
    display: flex;
    justify-content: flex-end;
    margin-top: 33px;
    gap: 24px;
}

.actions button {
    height: 114px;
    font-size: 36px;
    font-weight: 600;
    letter-spacing: 3px;
}

.actions .delete {
    width: 144px;
    margin-right: 12px;
    color: #ff5252;
}

.delete .icon {
    width: 72px;
    height: 72px;
}

.actions .done,
.actions .go {
    border-radius: 24px;
    border: 3px solid #42624a;
    padding: 0 31px;
    background-color: #293736;
    color: #81c784;
}

.actions .go {
    gap: 12px;
    padding: 0 39px;
    border-color: #2b5f83;
    background-color: #1f354b;
    color: #4fc3f7;
}

.go .icon {
    width: 54px;
    height: 54px;
}

/* bottom bar */
.footer {
    border-top: 3px solid #244964;
    box-shadow: 0 0 30px rgba(0, 0, 0, .6);
}

.handle {
    display: flex;
    flex-direction: column;
    align-items: center;
    justify-content: center;
    gap: 11px;
    height: 60px;
    border-bottom: 3px solid #244964;
}

.handle span {
    width: 120px;
    height: 5px;
    border-radius: 3px;
    background-color: #8b8a92;
}

.tabs {
    display: grid;
    grid-template-columns: 1fr 1fr 1fr;
    padding-top: 21px;
}

.tabs a {
    display: flex;
    flex-direction: column;
    align-items: center;
    gap: 3px;
    color: #929297;
    font-size: 39px;
    line-height: 51px;
    text-decoration: none;
}

.tab-icon {
    display: flex;
    align-items: center;
    justify-content: center;
    width: 213px;
    height: 129px;
    border-radius: 65px;
}

.tab-icon .icon {
    width: 84px;
    height: 84px;
}

.tabs .active {
    color: #64b5f6;
}

.active .tab-icon {
    border: 4px solid #64b5f6;
    background-color: #2e4b6b;
}

.home-bar {
    width: 420px;
    height: 15px;
    margin: 87px auto 24px;
    border-radius: 8px;
    background-color: #fff;
}
```
